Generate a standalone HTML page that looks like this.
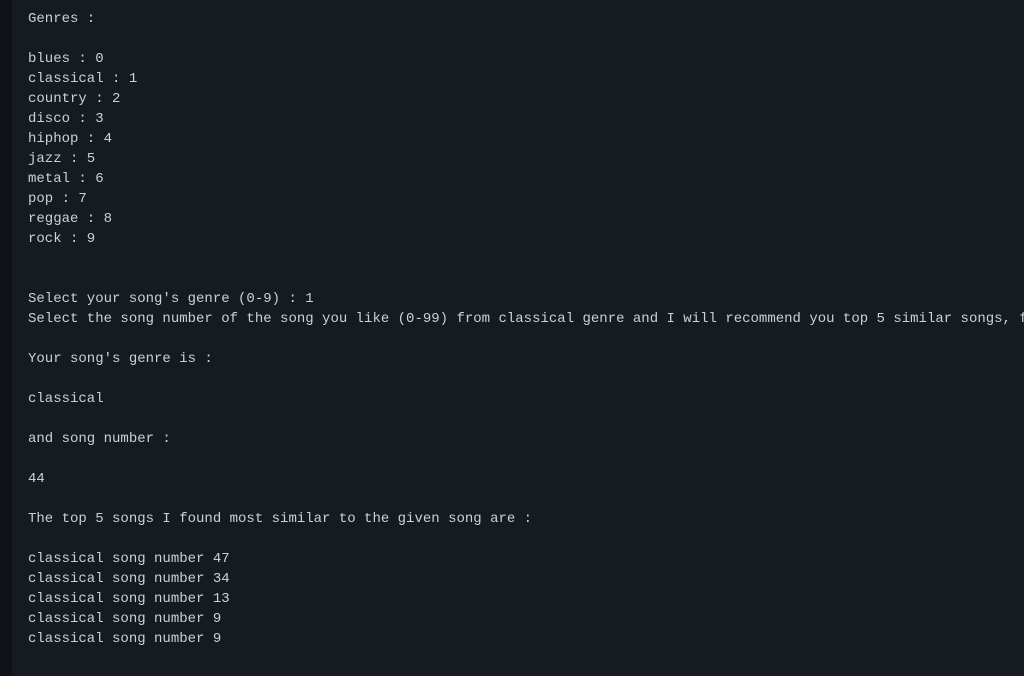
<!DOCTYPE html>
<html><head><meta charset="utf-8"><style>
html,body{margin:0;padding:0;width:1024px;height:676px;overflow:hidden;background:#161b22;}
.strip{position:absolute;left:0;top:0;width:12px;height:676px;background:#0f1318;}
pre{position:absolute;left:28px;top:9px;width:996px;overflow:hidden;margin:0;font-family:"Liberation Mono",monospace;font-size:14px;line-height:20px;color:#c9d1d9;white-space:pre;}
</style></head><body><div class="strip"></div><pre>Genres :

blues : 0
classical : 1
country : 2
disco : 3
hiphop : 4
jazz : 5
metal : 6
pop : 7
reggae : 8
rock : 9


Select your song's genre (0-9) : 1
Select the song number of the song you like (0-99) from classical genre and I will recommend you top 5 similar songs, f

Your song's genre is :

classical

and song number :

44

The top 5 songs I found most similar to the given song are :

classical song number 47
classical song number 34
classical song number 13
classical song number 9
classical song number 9</pre></body></html>
